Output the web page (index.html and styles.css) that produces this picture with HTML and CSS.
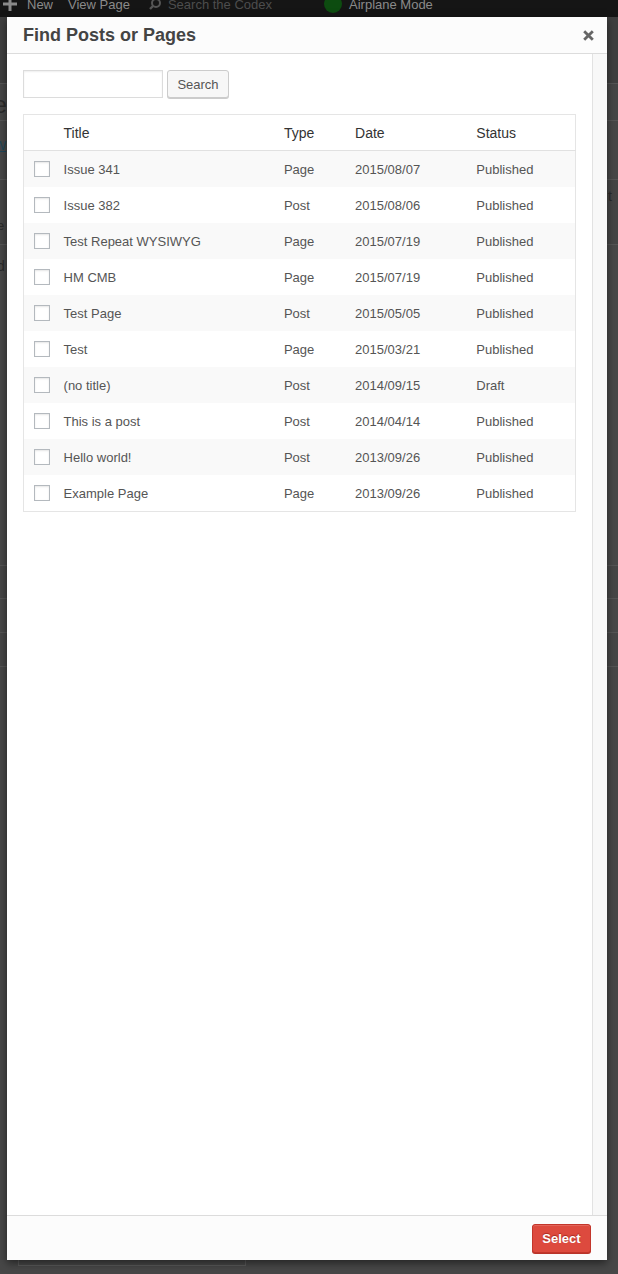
FILE: index.html
```html
<!DOCTYPE html>
<html lang="en">
<head>
<meta charset="utf-8">
<title>Find Posts or Pages</title>
<link rel="stylesheet" href="styles.css">
</head>
<body>
<div class="backdrop">
  <div class="adminbar">
    <div class="ab-inner">
      <span class="ab-item ab-new"><svg class="ab-plus" width="14" height="14" viewBox="0 0 14 14"><path d="M5.5 0h3v5.5H14v3H8.5V14h-3V8.5H0v-3h5.5z" fill="#8a8a8a"/></svg>New</span>
      <span class="ab-item ab-view">View Page</span>
      <span class="ab-item ab-search"><svg class="ab-mag" width="12" height="12" viewBox="0 0 12 12"><circle cx="7" cy="5" r="4" fill="none" stroke="#555" stroke-width="2"/><path d="M4 8 1 11" stroke="#555" stroke-width="2.4"/></svg><span class="ab-ph">Search the Codex</span></span>
      <span class="ab-item ab-air"><span class="ab-dot"></span>Airplane Mode</span>
    </div>
  </div>
  <div class="page">
    <div class="band band-a"></div>
    <div class="band band-b"><span class="frag frag-big">e</span></div>
    <div class="band band-c"><span class="frag frag-link">W</span></div>
    <div class="band band-d"><span class="frag frag-sm">e</span><span class="frag-r">t</span></div>
    <div class="band band-e"><span class="frag frag-sm">d</span></div>
    <div class="band band-f"></div>
    <div class="band band-g"></div>
    <div class="band band-h"></div>
    <div class="band band-rest"><div class="ghost-box"></div></div>
  </div>
</div>

<div class="modal">
  <div class="modal-header">
    <h1 class="modal-title">Find Posts or Pages</h1>
    <button class="close" type="button" aria-label="Close"><svg width="11" height="11" viewBox="0 0 11 11"><path d="M1.2 1.2l8.6 8.6M9.8 1.2l-8.6 8.6" stroke="#666" stroke-width="2.8" stroke-linecap="butt"/></svg></button>
  </div>
  <div class="modal-body">
    <div class="main">
      <form class="search-form">
        <input class="search-input" type="text">
        <button class="btn-search" type="button">Search</button>
      </form>
      <table class="posts">
        <colgroup>
          <col class="c-check"><col class="c-title"><col class="c-type"><col class="c-date"><col class="c-status">
        </colgroup>
        <thead>
          <tr><th></th><th>Title</th><th>Type</th><th>Date</th><th>Status</th></tr>
        </thead>
        <tbody>
          <tr><td><input class="cb" type="checkbox"></td><td>Issue 341</td><td>Page</td><td>2015/08/07</td><td>Published</td></tr>
          <tr><td><input class="cb" type="checkbox"></td><td>Issue 382</td><td>Post</td><td>2015/08/06</td><td>Published</td></tr>
          <tr><td><input class="cb" type="checkbox"></td><td>Test Repeat WYSIWYG</td><td>Page</td><td>2015/07/19</td><td>Published</td></tr>
          <tr><td><input class="cb" type="checkbox"></td><td>HM CMB</td><td>Page</td><td>2015/07/19</td><td>Published</td></tr>
          <tr><td><input class="cb" type="checkbox"></td><td>Test Page</td><td>Post</td><td>2015/05/05</td><td>Published</td></tr>
          <tr><td><input class="cb" type="checkbox"></td><td>Test</td><td>Page</td><td>2015/03/21</td><td>Published</td></tr>
          <tr><td><input class="cb" type="checkbox"></td><td>(no title)</td><td>Post</td><td>2014/09/15</td><td>Draft</td></tr>
          <tr><td><input class="cb" type="checkbox"></td><td>This is a post</td><td>Post</td><td>2014/04/14</td><td>Published</td></tr>
          <tr><td><input class="cb" type="checkbox"></td><td>Hello world!</td><td>Post</td><td>2013/09/26</td><td>Published</td></tr>
          <tr><td><input class="cb" type="checkbox"></td><td>Example Page</td><td>Page</td><td>2013/09/26</td><td>Published</td></tr>
        </tbody>
      </table>
    </div>
    <div class="sidebar"></div>
  </div>
  <div class="modal-footer">
    <button class="btn-select" type="button">Select</button>
  </div>
</div>
</body>
</html>
```

FILE: styles.css
```css
html, body {
  margin: 0;
  padding: 0;
}
body {
  width: 618px;
  height: 1274px;
  overflow: hidden;
  position: relative;
  background: #484848;
  font-family: "Liberation Sans", Arial, "Helvetica Neue", sans-serif;
}

/* ---------- dimmed backdrop ---------- */
.backdrop {
  display: flex;
  flex-direction: column;
  height: 1274px;
}
.adminbar {
  height: 17px;
  background: #151515;
  overflow: hidden;
}
.ab-inner {
  display: flex;
  align-items: center;
  height: 20px;
  margin-top: -6px;
  padding-left: 3px;
  font-size: 13px;
  color: #8a8a8a;
  white-space: nowrap;
}
.ab-item {
  display: flex;
  align-items: center;
}
.ab-plus { margin-right: 10px; }
.ab-view { margin-left: 15px; }
.ab-search { margin-left: 19px; }
.ab-mag { margin-right: 7px; }
.ab-ph { color: #4d4d4d; }
.ab-air { margin-left: 52px; }
.ab-dot {
  width: 18px;
  height: 18px;
  border-radius: 50%;
  background: #0d4c10;
  margin-right: 7px;
}

.page {
  flex: 1;
  display: flex;
  flex-direction: column;
}
.band {
  position: relative;
  border-top: 1px solid #555;
  display: flex;
  justify-content: space-between;
  overflow: hidden;
}
.band-a { height: 66px; background: #3f3f3f; border-top: 0; }
.band-b { height: 36px; background: #464646; }
.band-c { height: 58px; background: #474747; }
.band-d { height: 64px; background: #454545; }
.band-e { height: 320px; background: #484848; }
.band-f { height: 32px; background: #464646; }
.band-g { height: 33px; background: #484848; }
.band-h { height: 33px; background: #464646; }
.band-rest { flex: 1; background: #474747; display: flex; align-items: flex-end; }
.frag {
  color: #2a2a2a;
  font-size: 13px;
  line-height: 1;
}
.frag-big {
  font-size: 23px;
  margin-top: 10px;
  margin-left: -6px;
}
.frag-link {
  color: #1f4659;
  text-decoration: underline;
  margin-top: 18px;
  margin-left: -6px;
}
.frag-sm {
  margin-top: 39px;
  margin-left: -3px;
}
.band-e .frag-sm { margin-top: 14px; font-size: 14px; }
.frag-r {
  color: #2a2a2a;
  font-size: 14px;
  margin-top: 8px;
  margin-right: 6px;
}
.ghost-box {
  width: 226px;
  height: 20px;
  margin: 0 0 8px 18px;
  border: 1px solid #5a5a5a;
  border-top: 0;
}

/* ---------- modal ---------- */
.modal {
  position: absolute;
  left: 7px;
  top: 17px;
  width: 600px;
  height: 1243px;
  display: flex;
  flex-direction: column;
  background: #fff;
  box-shadow: 0 3px 8px rgba(0, 0, 0, 0.5);
}
.modal-header {
  height: 36px;
  flex: none;
  display: flex;
  align-items: center;
  justify-content: space-between;
  padding: 0 13px 0 16px;
  background: #fcfcfc;
  border-bottom: 1px solid #dcdcdc;
}
.modal-title {
  margin: 0;
  font-size: 18px;
  font-weight: bold;
  line-height: 36px;
  color: #444;
}
.close {
  display: flex;
  padding: 0;
  margin: 1px 0 0;
  border: 0;
  background: none;
  width: 11px;
  height: 11px;
}
.modal-body {
  flex: 1;
  display: flex;
  min-height: 0;
}
.main {
  flex: 1;
  padding: 16px;
}
.sidebar {
  width: 14px;
  flex: none;
  background: #f8f8f8;
  border-left: 1px solid #e2e2e2;
}

.search-form {
  display: flex;
  gap: 4px;
  margin: 0;
}
.search-input {
  box-sizing: border-box;
  width: 140px;
  height: 28px;
  margin: 0;
  border: 1px solid #dcdcdc;
  background: #fff;
  box-shadow: inset 0 1px 2px rgba(0, 0, 0, 0.07);
}
.btn-search {
  box-sizing: border-box;
  width: 62px;
  height: 28px;
  margin: 0;
  padding: 0;
  border: 1px solid #cccccc;
  border-radius: 3px;
  background: #f7f7f7;
  box-shadow: 0 1px 0 #cccccc;
  font-family: inherit;
  font-size: 13px;
  color: #555;
}

.posts {
  margin-top: 16px;
  width: 553px;
  table-layout: fixed;
  border-collapse: collapse;
  border: 1px solid #e5e5e5;
  font-size: 13px;
  color: #555;
}
.c-check { width: 40px; }
.c-title { width: 220px; }
.c-type { width: 71px; }
.c-date { width: 121px; }
.c-status { width: 99px; }
.posts th {
  height: 35px;
  padding: 0;
  text-align: left;
  font-weight: normal;
  font-size: 14px;
  color: #333;
  border-bottom: 1px solid #e1e1e1;
  vertical-align: middle;
}
.posts td {
  height: 36px;
  padding: 0;
  vertical-align: middle;
  white-space: nowrap;
}
.posts tbody tr:nth-child(odd) { background: #f9f9f9; }
.cb {
  -webkit-appearance: none;
  appearance: none;
  display: block;
  box-sizing: border-box;
  width: 16px;
  height: 16px;
  margin: 0 0 0 10px;
  border: 1px solid #b4b9be;
  background: #fff;
  box-shadow: inset 0 1px 2px rgba(0, 0, 0, 0.1);
}

.modal-footer {
  height: 44px;
  flex: none;
  display: flex;
  align-items: center;
  justify-content: flex-end;
  padding-right: 16px;
  background: #fcfcfc;
  border-top: 1px solid #dcdcdc;
}
.btn-select {
  box-sizing: border-box;
  width: 59px;
  height: 29px;
  margin: 0;
  padding: 0;
  border: 1px solid #c3362b;
  border-radius: 3px;
  background: #dd4a3e;
  box-shadow: inset 0 1px 0 rgba(255, 255, 255, 0.15), 0 1px 0 #b8342a;
  font-family: inherit;
  font-size: 13px;
  font-weight: bold;
  color: #fff;
  text-shadow: 0 -1px 1px #a42a20;
}
```
